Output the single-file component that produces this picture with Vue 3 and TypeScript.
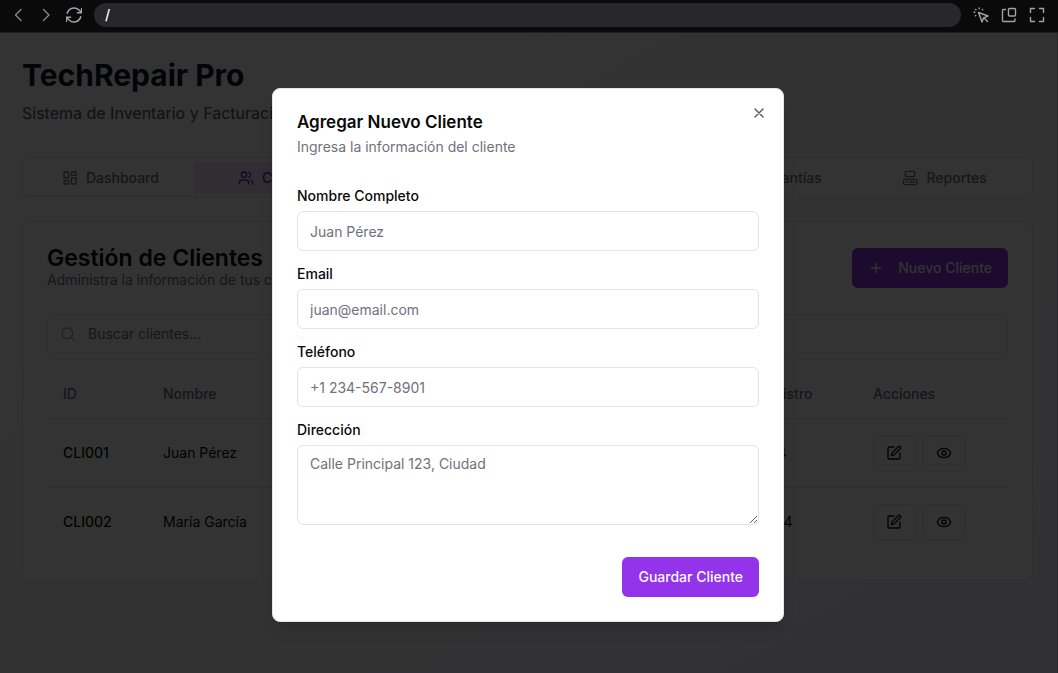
<script setup lang="ts">
import { ref, computed } from 'vue'

interface Tab { id: string; label: string }
interface Client { id: string; name: string; email: string; phone: string; date: string }

const tabs: Tab[] = [
  { id: 'dashboard', label: 'Dashboard' },
  { id: 'clientes', label: 'Clientes' },
  { id: 'inventario', label: 'Inventario' },
  { id: 'facturacion', label: 'Facturas' },
  { id: 'garantias', label: 'Garantías' },
  { id: 'reportes', label: 'Reportes' },
]
const activeTab = ref('clientes')
const dialogOpen = ref(true)
const search = ref('')
const path = ref('/')
const form = ref({ name: '', email: '', phone: '', address: '' })

const clients = ref<Client[]>([
  { id: 'CLI001', name: 'Juan Pérez', email: 'juan@email.com', phone: '+1 234-567-8901', date: '15/01/2024' },
  { id: 'CLI002', name: 'María García', email: 'maria@email.com', phone: '+1 234-567-8902', date: '20/02/2024' },
])
const visibleClients = computed(() =>
  clients.value.filter((c) => c.name.toLowerCase().includes(search.value.toLowerCase())),
)

function save() {
  dialogOpen.value = false
}
</script>

<template>
  <div class="browser">
    <header class="toolbar">
      <button type="button" class="tool" aria-label="Atrás">
        <svg viewBox="0 0 16 16"><path d="M11 2.500 5.500 8l5.500 5.500" /></svg>
      </button>
      <button type="button" class="tool" aria-label="Adelante">
        <svg viewBox="0 0 16 16"><path d="m5.500 2.500 5.500 5.500-5.500 5.500" /></svg>
      </button>
      <button type="button" class="tool bright" aria-label="Recargar">
        <svg class="reload" viewBox="2.500 2.500 19 19"><path d="M16.023 9.348h4.992M2.985 19.644v-4.992m0 0h4.992m-4.993 0 3.181 3.183a8.250 8.250 0 0 0 13.803-3.700M4.031 9.865a8.250 8.250 0 0 1 13.803-3.700l3.181 3.182m0-4.991v4.990" /></svg>
      </button>
      <input v-model="path" class="address" type="text" aria-label="Dirección web" />
      <button type="button" class="tool bright" aria-label="Seleccionar elemento">
        <svg viewBox="0 0 16 16"><path d="m5.500 5.500 3.500 9.500 1.600-4.200L15 9ZM10.800 10.800l3.700 3.700" /><path d="M6.200 1v.8M1 5.200h.8M2.600 2.400l.4.400M9.600 2.400l-.3.300M2.400 8.800l.3-.3" /></svg>
      </button>
      <button type="button" class="tool bright" aria-label="Abrir ventana">
        <svg viewBox="0 0 16 16"><rect x="7.500" y="1.500" width="7" height="7.500" rx="1" /><path d="M4.500 2.500h-2a1 1 0 0 0-1 1v10a1 1 0 0 0 1 1h10.500a1 1 0 0 0 1-1V12" /></svg>
      </button>
      <button type="button" class="tool bright" aria-label="Pantalla completa">
        <svg viewBox="0 0 16 16"><path d="M1.500 5.500v-4h4M10.500 1.500h4v4M14.500 10.500v4h-4M5.500 14.500h-4v-4" /></svg>
      </button>
    </header>

    <div class="viewport">
      <main class="page">
        <h1>TechRepair Pro</h1>
        <p class="subtitle">Sistema de Inventario y Facturación</p>

        <nav class="tabs" role="tablist">
          <button
            v-for="tab in tabs"
            :key="tab.id"
            type="button"
            role="tab"
            class="tab"
            :class="{ active: tab.id === activeTab }"
            :aria-selected="tab.id === activeTab"
            @click="activeTab = tab.id"
          >
            <svg class="icon" viewBox="0 0 24 24">
              <template v-if="tab.id === 'dashboard'">
                <rect x="3" y="3" width="7" height="9" rx="1" /><rect x="14" y="3" width="7" height="5" rx="1" />
                <rect x="14" y="12" width="7" height="9" rx="1" /><rect x="3" y="16" width="7" height="5" rx="1" />
              </template>
              <template v-else-if="tab.id === 'clientes'">
                <circle cx="9" cy="7" r="4" />
                <path d="M16 21v-2a4 4 0 0 0-4-4H6a4 4 0 0 0-4 4v2M22 21v-2a4 4 0 0 0-3-3.870M16 3.130a4 4 0 0 1 0 7.750" />
              </template>
              <template v-else-if="tab.id === 'reportes'">
                <rect x="5" y="2" width="14" height="8" rx="2" /><rect x="2" y="14" width="20" height="8" rx="2" />
                <path d="M6 18h2M12 18h6" />
              </template>
              <rect v-else x="4" y="3" width="16" height="18" rx="2" />
            </svg>
            {{ tab.label }}
          </button>
        </nav>

        <section class="card">
          <div class="card-head">
            <div>
              <h2>Gestión de Clientes</h2>
              <p class="muted">Administra la información de tus clientes</p>
            </div>
            <button type="button" class="primary add" @click="dialogOpen = true">
              <svg class="icon" viewBox="0 0 24 24"><path d="M5 12h14M12 5v14" /></svg>
              Nuevo Cliente
            </button>
          </div>

          <label class="search">
            <svg class="icon" viewBox="0 0 24 24"><circle cx="11" cy="11" r="8" /><path d="m21 21-4.300-4.300" /></svg>
            <input v-model="search" type="text" placeholder="Buscar clientes..." aria-label="Buscar clientes" />
          </label>

          <table>
            <colgroup>
              <col class="c-id" /><col class="c-name" /><col /><col class="c-phone" /><col class="c-date" /><col class="c-actions" />
            </colgroup>
            <thead>
              <tr><th>ID</th><th>Nombre</th><th>Email</th><th>Teléfono</th><th>Fecha Registro</th><th>Acciones</th></tr>
            </thead>
            <tbody>
              <tr v-for="client in visibleClients" :key="client.id">
                <td class="strong">{{ client.id }}</td>
                <td>{{ client.name }}</td>
                <td>{{ client.email }}</td>
                <td>{{ client.phone }}</td>
                <td>{{ client.date }}</td>
                <td>
                  <div class="actions">
                    <button type="button" class="outline" aria-label="Editar">
                      <svg class="icon" viewBox="0 0 24 24">
                        <path d="M12 3H5a2 2 0 0 0-2 2v14a2 2 0 0 0 2 2h14a2 2 0 0 0 2-2v-7" />
                        <path d="M18.375 2.625a1 1 0 0 1 3 3l-9.013 9.014a2 2 0 0 1-.853.505l-2.873.84a.5.5 0 0 1-.62-.62l.84-2.873a2 2 0 0 1 .506-.852z" />
                      </svg>
                    </button>
                    <button type="button" class="outline" aria-label="Ver">
                      <svg class="icon" viewBox="0 0 24 24">
                        <path d="M2.062 12.348a1 1 0 0 1 0-.696 10.750 10.750 0 0 1 19.876 0 1 1 0 0 1 0 .696 10.750 10.750 0 0 1-19.876 0" />
                        <circle cx="12" cy="12" r="3" />
                      </svg>
                    </button>
                  </div>
                </td>
              </tr>
            </tbody>
          </table>
        </section>
      </main>

      <div v-if="dialogOpen" class="overlay">
        <div class="dialog" role="dialog" aria-modal="true" aria-labelledby="dialog-title">
          <button type="button" class="close" aria-label="Cerrar" @click="dialogOpen = false">
            <svg class="icon" viewBox="0 0 24 24"><path d="M18 6 6 18M6 6l12 12" /></svg>
          </button>
          <h3 id="dialog-title">Agregar Nuevo Cliente</h3>
          <p class="muted">Ingresa la información del cliente</p>
          <form @submit.prevent="save">
            <div class="field">
              <label for="name">Nombre Completo</label>
              <input id="name" v-model="form.name" type="text" placeholder="Juan Pérez" />
            </div>
            <div class="field">
              <label for="email">Email</label>
              <input id="email" v-model="form.email" type="email" placeholder="juan@email.com" />
            </div>
            <div class="field">
              <label for="phone">Teléfono</label>
              <input id="phone" v-model="form.phone" type="tel" placeholder="+1 234-567-8901" />
            </div>
            <div class="field">
              <label for="address">Dirección</label>
              <textarea id="address" v-model="form.address" placeholder="Calle Principal 123, Ciudad"></textarea>
            </div>
            <div class="footer">
              <button type="submit" class="primary">Guardar Cliente</button>
            </div>
          </form>
        </div>
      </div>
    </div>
  </div>
</template>

<style>
body {
  margin: 0;
  background: #0a0a0a;
}
</style>

<style scoped>
* {
  box-sizing: border-box;
}
.browser {
  display: flex;
  flex-direction: column;
  min-height: 100vh;
  font-family: Inter, "Liberation Sans", sans-serif;
  font-size: 14px;
  line-height: 20px;
  color: #0a0a0a;
}
button,
input,
textarea {
  font: inherit;
  color: inherit;
}
button {
  cursor: pointer;
}
svg {
  flex: none;
  fill: none;
  stroke: currentColor;
  stroke-width: 2;
  stroke-linecap: round;
  stroke-linejoin: round;
}
.icon {
  width: 16px;
  height: 16px;
}
h1,
h2,
h3,
p {
  margin: 0;
}

/* Browser toolbar */
.toolbar {
  display: flex;
  align-items: center;
  gap: 12px;
  height: 33px;
  padding: 0 13px 3px 10px;
  background: #0a0a0a;
  border-bottom: 1px solid #1f1f21;
}
.tool {
  display: flex;
  padding: 0;
  border: 0;
  background: none;
  color: #85858d;
}
.tool.bright {
  color: #a1a1aa;
}
.tool svg {
  width: 16px;
  height: 16px;
  stroke-width: 1.4;
}
.tool .reload {
  stroke-width: 1.8;
}
.address {
  flex: 1;
  min-width: 0;
  height: 24px;
  padding: 0 11px;
  border: 0;
  border-radius: 12px;
  background: #27272c;
  color: #fff;
  font-weight: 500;
  outline: none;
}

/* Page */
.viewport {
  position: relative;
  flex: 1;
  border-right: 1px solid #27272a;
  background: linear-gradient(to bottom right, #ffffff, #f5f3ff);
}
.page {
  padding: 24px 24px 24px 22px;
}
h1 {
  font-size: 30px;
  line-height: 36px;
  font-weight: 700;
  color: #111827;
}
.subtitle {
  margin-top: 8px;
  font-size: 16px;
  line-height: 24px;
  color: #4b5563;
}
.tabs {
  display: grid;
  grid-template-columns: repeat(6, 1fr);
  margin-top: 32px;
  padding: 4px 4px 2px;
  border: 1px solid #e0e0fa;
  border-radius: 6px;
  background: #fff;
}
.tab {
  display: flex;
  align-items: center;
  justify-content: center;
  gap: 8px;
  height: 32px;
  padding: 0;
  border: 0;
  border-radius: 2px;
  background: none;
  font-weight: 500;
  color: #737373;
}
.tab.active {
  background: #ede0ff;
  color: #7e22ce;
}
.card {
  margin-top: 24px;
  padding: 24px;
  border: 1px solid #e0e0fa;
  border-radius: 8px;
  background: #fff;
}
.card-head {
  display: flex;
  align-items: center;
  justify-content: space-between;
  margin-bottom: 24px;
}
h2 {
  font-size: 23px;
  line-height: 24px;
  font-weight: 600;
}
.muted {
  color: #71717a;
}
.card-head .muted {
  white-space: nowrap;
}
.primary {
  display: flex;
  align-items: center;
  height: 40px;
  padding: 0 16px;
  border: 0;
  border-radius: 6px;
  background: #9333ea;
  color: #fafafa;
  font-weight: 500;
}
.add {
  gap: 14px;
}
.search {
  display: flex;
  align-items: center;
  gap: 12px;
  height: 40px;
  padding: 0 12px;
  border: 1px solid #e5e5e5;
  border-radius: 6px;
  color: #9ca3af;
}
.search input {
  flex: 1;
  min-width: 0;
  padding: 0;
  border: 0;
  background: none;
  outline: none;
}
.search input::placeholder {
  color: #71717a;
}
table {
  width: 100%;
  margin-top: 16px;
  border-collapse: collapse;
  table-layout: fixed;
}
.c-id {
  width: 100px;
}
.c-name {
  width: 130px;
}
.c-phone {
  width: 190px;
}
.c-date {
  width: 160px;
}
.c-actions {
  width: 151px;
}
th,
td {
  padding: 16px;
  text-align: left;
  font-weight: 400;
}
th {
  height: 48px;
  padding: 0 16px;
  font-weight: 500;
  color: #71717a;
}
thead tr,
tbody tr:not(:last-child) {
  border-bottom: 1px solid #e5e5e5;
}
.strong {
  font-weight: 500;
}
.actions {
  display: flex;
  gap: 8px;
}
.outline {
  display: flex;
  align-items: center;
  justify-content: center;
  width: 42px;
  height: 36px;
  padding: 0;
  border: 1px solid #e5e5e5;
  border-radius: 6px;
  background: #fff;
}

/* Dialog */
.overlay {
  position: absolute;
  inset: 0;
  display: flex;
  align-items: center;
  justify-content: center;
  padding: 4px 1px 0 0;
  background: rgba(0, 0, 0, 0.8);
}
.dialog {
  position: relative;
  width: 100%;
  max-width: 512px;
  padding: 24px;
  border: 1px solid #e5e5e5;
  border-radius: 8px;
  background: #fff;
  box-shadow: 0 10px 15px -3px rgba(0, 0, 0, 0.1), 0 4px 6px -4px rgba(0, 0, 0, 0.1);
}
h3 {
  margin-bottom: 6px;
  font-size: 17px;
  line-height: 18px;
  font-weight: 600;
}
.close {
  position: absolute;
  top: 16px;
  right: 16px;
  display: flex;
  padding: 0;
  border: 0;
  background: none;
  opacity: 0.7;
}
form {
  display: grid;
  gap: 16px;
  padding-top: 32px;
}
.field {
  display: grid;
  gap: 8px;
}
.field label {
  line-height: 14px;
  font-weight: 500;
}
.field input,
.field textarea {
  display: block;
  width: 100%;
  height: 40px;
  padding: 8px 12px;
  border: 1px solid #e5e5e5;
  border-radius: 6px;
  background: #fff;
}
.field textarea {
  height: 80px;
  resize: vertical;
}
.field input::placeholder,
.field textarea::placeholder {
  color: #71717a;
}
.footer {
  display: flex;
  justify-content: flex-end;
  padding-top: 16px;
}
</style>
